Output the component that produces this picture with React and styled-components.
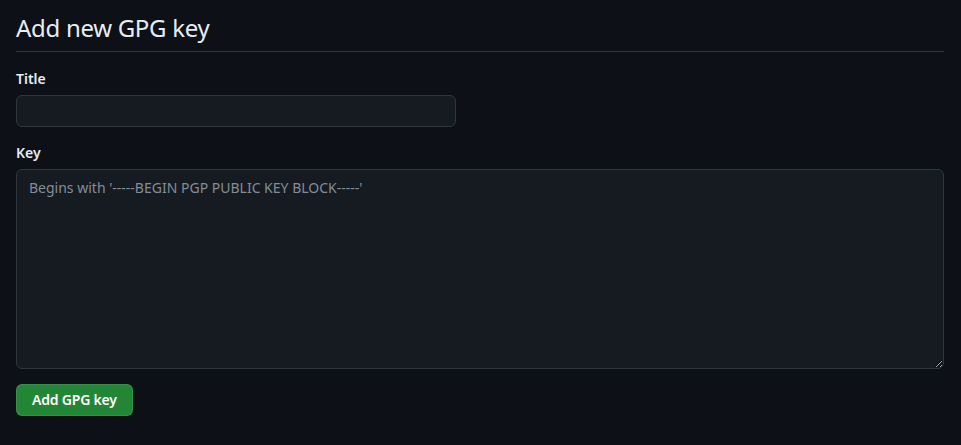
import React from 'react'
import styled, { createGlobalStyle } from 'styled-components'

const GlobalStyle = createGlobalStyle`
  html, body {
    margin: 0;
    background: #0d1117;
    color: #e6edf3;
    font-family: 'Noto Sans', 'Open Sans', sans-serif;
    color-scheme: dark;
  }
`

const Page = styled.main`
  padding: 13px 17px 0 16px;
  min-height: 445px;
  box-sizing: border-box;
`

const Subhead = styled.div`
  padding-bottom: 8px;
  margin-bottom: 17px;
  border-bottom: 1px solid #30363d;

  h2 {
    margin: 0;
    font-size: 24px;
    font-weight: 400;
    line-height: 30px;
    letter-spacing: -0.3px;
    color: #e6edf3;
  }
`

const Group = styled.div`
  display: flex;
  flex-direction: column;
  align-items: flex-start;
  margin-bottom: ${(p) => p.gap || 16}px;
`

const Label = styled.label`
  font-size: 14px;
  font-weight: 600;
  line-height: 20px;
  margin-bottom: 6px;
  color: #e6edf3;
`

const fieldBase = `
  box-sizing: border-box;
  background: #161b22;
  border: 1px solid #30363d;
  border-radius: 6px;
  color: #e6edf3;
  font-family: 'Noto Sans', 'Open Sans', sans-serif;
  font-size: 14px;
  line-height: 20px;
  padding: 5px 12px;
  outline: none;
  color-scheme: dark;
  &::placeholder {
    color: #848d97;
  }
`

const Input = styled.input`
  ${fieldBase}
  width: 440px;
  height: 32px;
`

const TextArea = styled.textarea`
  ${fieldBase}
  width: 100%;
  height: 200px;
  padding: 8px 12px;
  resize: vertical;
`

const Button = styled.button`
  box-sizing: border-box;
  height: 32px;
  padding: 0 15px;
  background: #238636;
  border: 1px solid rgba(240, 246, 252, 0.1);
  border-radius: 6px;
  color: #ffffff;
  font-family: 'Noto Sans', 'Open Sans', sans-serif;
  font-size: 14px;
  font-weight: 600;
  line-height: 20px;
  letter-spacing: -0.2px;
  cursor: pointer;
`

export default function App() {
  return (
    <>
      <GlobalStyle />
      <Page>
        <Subhead>
          <h2>Add new GPG key</h2>
        </Subhead>
        <form onSubmit={(e) => e.preventDefault()}>
          <Group>
            <Label htmlFor="title">Title</Label>
            <Input id="title" type="text" />
          </Group>
          <Group gap={15}>
            <Label htmlFor="key">Key</Label>
            <TextArea
              id="key"
              placeholder="Begins with '-----BEGIN PGP PUBLIC KEY BLOCK-----'"
            />
          </Group>
          <Button type="submit">Add GPG key</Button>
        </form>
      </Page>
    </>
  )
}
